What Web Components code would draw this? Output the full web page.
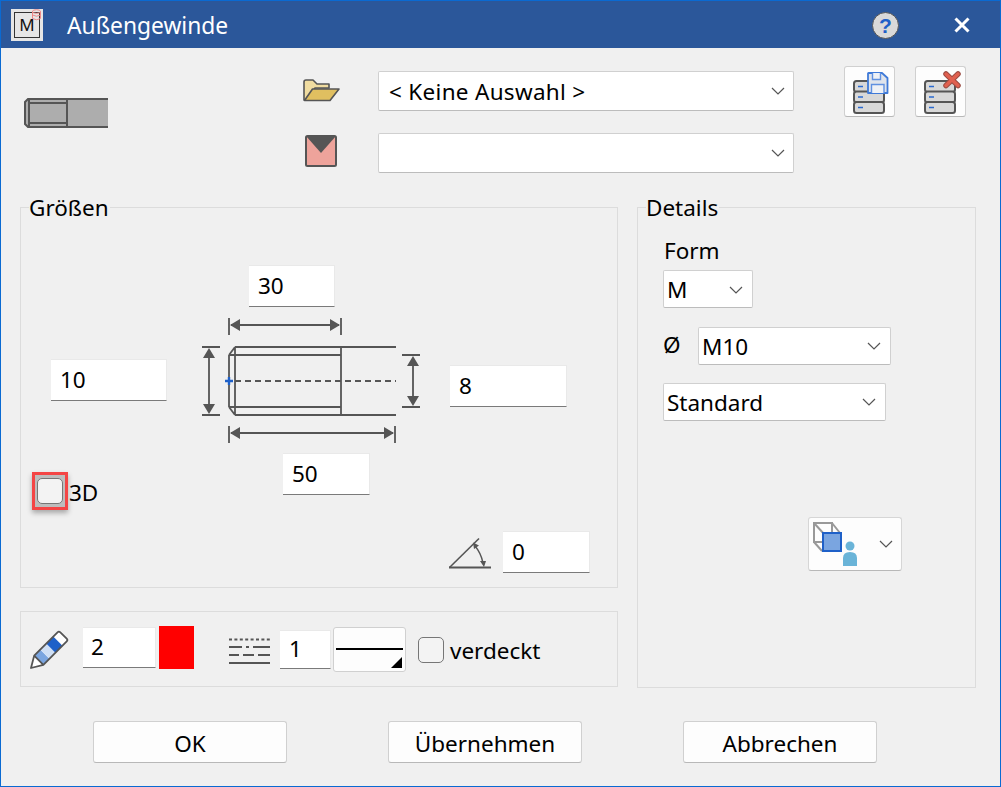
<!DOCTYPE html>
<html lang="de">
<head>
<meta charset="utf-8">
<title>Außengewinde</title>
<style>
  html, body { margin: 0; padding: 0; background: #f0f0f0; }
  body { font: 22.5px "Noto Sans", "Open Sans", sans-serif; color: #000; }
</style>
</head>
<body>
<gewinde-dialog></gewinde-dialog>

<script>
// shared chevron for the drop-downs
const CHEVRON = `<svg width="14" height="8" viewBox="0 0 14 8"><path d="M1 1l6 6 6-6" fill="none" stroke="#555" stroke-width="1.2"/></svg>`;

// icon artwork, looked up by the name attribute of <dlg-icon>
const ICONS = {
  thread: `<svg width="84" height="30" viewBox="0 0 84 30">
    <path d="M4 1H84V29H4L1 26V4z" fill="#adadad"/>
    <path d="M84 1H4L1 4V26L4 29H84M5 1V29M5 5H43M5 25H43M43 1V29" fill="none" stroke="#555" stroke-width="2"/>
  </svg>`,
  folder: `<svg width="37" height="23" viewBox="0 0 37 23">
    <path d="M1 21V3Q1 1 3 1H10L14 5H26V9H12L3 21z" fill="#f0dca0" stroke="#555" stroke-width="1.6" stroke-linejoin="round"/>
    <path d="M1.500 21.500L9.500 10H36L27 21.500z" fill="#e0bf60" stroke="#555" stroke-width="1.6" stroke-linejoin="round"/>
  </svg>`,
  mark: `<svg width="32" height="32" viewBox="0 0 32 32">
    <rect x="1" y="1" width="30" height="30" rx="1.500" fill="#eea39b" stroke="#555" stroke-width="2"/>
    <path d="M1 1H31L16 18z" fill="#555"/>
  </svg>`,
  dbsave: `<svg width="38" height="44" viewBox="0 0 38 44">
    <g fill="#d8d8d8" stroke="#555" stroke-width="2">
      <rect x="1" y="10" width="30" height="11" rx="2.500"/>
      <rect x="1" y="20.500" width="30" height="11" rx="2.500"/>
      <rect x="1" y="31" width="30" height="11" rx="2.500"/>
    </g>
    <path d="M5 15.500h5M5 26h5M5 36.500h5" stroke="#2a6ad0" stroke-width="1.600"/>
    <path d="M15 2.500Q15 2 15.500 2H29L34.500 7V22H15z" fill="#dfe4ec" stroke="#3f7ad8" stroke-width="1.800" stroke-linejoin="round"/>
    <path d="M19.500 2V8.500H27.500V2M18.500 22V13.500H31V22" fill="#eef1f6" stroke="#5f90e0" stroke-width="1.400"/>
  </svg>`,
  dbdel: `<svg width="38" height="44" viewBox="0 0 38 44">
    <g fill="#d8d8d8" stroke="#555" stroke-width="2">
      <rect x="1" y="10" width="30" height="11" rx="2.500"/>
      <rect x="1" y="20.500" width="30" height="11" rx="2.500"/>
      <rect x="1" y="31" width="30" height="11" rx="2.500"/>
    </g>
    <path d="M5 15.500h5M5 26h5M5 36.500h5" stroke="#2a6ad0" stroke-width="1.600"/>
    <path d="M22 3L34 14.500M34 3L22 14.500" stroke="#9a4b42" stroke-width="5.500" stroke-linecap="round"/>
    <path d="M22 3L34 14.500M34 3L22 14.500" stroke="#e0604f" stroke-width="3.500" stroke-linecap="round"/>
  </svg>`,
  dims: `<svg width="240" height="150" viewBox="0 0 240 150" fill="none" stroke="#555" stroke-width="1.800">
    <path d="M39 18V35M151 18V35M41 25H149M205 126V143M39 126V143M41 133H203"/>
    <path d="M12 47H30M12 115H30M19 50V112M212 55H230M212 107H230M223 58V104"/>
    <path d="M45 47H206M45 115H206M39 55H151M39 107H151M39 55V107M39 55L45 47M39 107L45 115M45 47V115M151 47V115"/>
    <path d="M45 81H206" stroke-dasharray="6 4"/>
    <g fill="#555" stroke="none">
      <path d="M40 25L50 19V31zM150 25L140 19V31zM40 133L50 127V139zM204 133L194 127V139z"/>
      <path d="M19 48L13 58H25zM19 114L13 104H25zM223 56L217 66H229zM223 106L217 96H229z"/>
    </g>
    <path d="M35 81H43M39 77V85" stroke="#1e60c8" stroke-width="2.400"/>
  </svg>`,
  angle: `<svg width="44" height="34" viewBox="0 0 44 34" fill="none" stroke="#555">
    <path d="M1.500 31.500L31 2.500" stroke-width="1.600"/>
    <path d="M1 31.500H43" stroke-width="1.800"/>
    <path d="M27 10Q33 17 35 27" stroke-width="1.400"/>
    <path d="M25 6.500L31 9.500L26 13zM36 31L32 25L38 25z" fill="#555" stroke="none"/>
  </svg>`,
  pencil: `<svg width="42" height="42" viewBox="0 0 42 42">
    <g transform="translate(2 40) rotate(-45)">
      <path d="M0 0L11-6.500H44Q46-6.500 46-4.500V4.500Q46 6.500 44 6.500H11z" fill="#fff"/>
      <rect x="11" y="-6.500" width="8.500" height="13" fill="#7aa5e0"/>
      <rect x="19.500" y="-6.500" width="8.500" height="13" fill="#cfdff5"/>
      <rect x="28" y="-6.500" width="10" height="13" fill="#1e60c8"/>
      <path d="M0 0L11-6.500H44Q46-6.500 46-4.500V4.500Q46 6.500 44 6.500H11zM11-6.500V6.500" fill="none" stroke="#555" stroke-width="1.800" stroke-linejoin="round"/>
    </g>
  </svg>`,
  lines: `<svg width="41" height="27" viewBox="0 0 41 27" fill="none" stroke="#555" stroke-width="2">
    <path d="M0 1.500H41" stroke-dasharray="3 2.400"/>
    <path d="M0 9H13M17 9H20M24 9H41"/>
    <path d="M0 17H10M14 17H25M29 17H41"/>
    <path d="M0 25H41"/>
  </svg>`,
  view: `<svg width="50" height="46" viewBox="0 0 50 46">
    <path d="M1 1H19V20H1zM1 1L11 12M19 1L27 11M1 20L9 29" fill="none" stroke="#999" stroke-width="2"/>
    <rect x="10" y="11" width="18" height="18" fill="#7aa5e0" stroke="#1e60c8" stroke-width="2"/>
    <circle cx="37" cy="24" r="4.500" fill="#6ab4d8"/>
    <path d="M30 44V36Q30 30 37 30Q44 30 44 36V44z" fill="#6ab4d8"/>
  </svg>`
};

class DlgIcon extends HTMLElement {
  constructor() {
    super();
    this.attachShadow({ mode: 'open' });
    this.shadowRoot.innerHTML = `<style>:host{display:block;flex:none;line-height:0}</style>` + (ICONS[this.getAttribute('name')] || '');
  }
}
customElements.define('dlg-icon', DlgIcon);

class TitleBar extends HTMLElement {
  constructor() {
    super();
    this.attachShadow({ mode: 'open' });
    this.shadowRoot.innerHTML = `
      <style>
        :host {
          display: flex; align-items: center; height: 48px; box-sizing: border-box;
          background: #2b579a; border: 1px solid #0a6ad2; border-bottom: 0;
          padding-top: 1px; font-size: 22.8px;
        }
        .app {
          width: 32px; height: 32px; margin-left: 10px; background: #e6e6e6; flex: none;
          display: flex; justify-content: center; align-items: flex-end; box-sizing: border-box;
          padding: 3px; position: relative;
        }
        .frame {
          width: 100%; height: 26px; box-sizing: border-box; border: 1px solid #333; border-right-width: 1.5px;
          font-size: 17px; line-height: 24px; text-align: center; color: #111;
        }
        .badge { position: absolute; right: 1px; top: 0; }
        .text { margin-left: 24px; padding-top: 2px; color: #fff; line-height: 30px; }
        .help { margin-left: auto; line-height: 0; }
        .help div {
          width: 27px; height: 27px; box-sizing: border-box; border-radius: 50%; background: #d9d9d9;
          border: 1px solid #555; color: #1e60c8; font: bold 21px/25px "Liberation Sans", sans-serif; text-align: center;
        }
        .close { margin: 0 30px 0 55px; line-height: 0; }
      </style>
      <div class="app">
        <div class="frame">M</div>
        <svg class="badge" width="11" height="12" viewBox="0 0 11 12" fill="none" stroke="#e88" stroke-width="1"><ellipse cx="5.500" cy="2.500" rx="4" ry="1.800"/><path d="M1.500 2.500V9.500Q5.500 12 9.500 9.500V2.500M1.500 6Q5.500 8.500 9.500 6"/></svg>
      </div>
      <div class="text"><slot></slot></div>
      <div class="help"><div>?</div></div>
      <div class="close"><svg width="16" height="16" viewBox="0 0 16 16"><path d="M1.500 1.500L14.500 14.500M14.500 1.500L1.500 14.500" stroke="#fff" stroke-width="3"/></svg></div>`;
  }
}
customElements.define('title-bar', TitleBar);

class GroupBox extends HTMLElement {
  constructor() {
    super();
    this.attachShadow({ mode: 'open' });
    const legend = this.getAttribute('legend');
    this.shadowRoot.innerHTML = `
      <style>
        :host { display: flex; flex-direction: column; box-sizing: border-box; border: 1px solid #dcdcdc; }
        .legend {
          align-self: flex-start; margin: -16px 0 0 8px; padding-right: 1px; height: 30px; line-height: 32px;
          background: #f0f0f0;
        }
      </style>
      ${legend ? `<div class="legend">${legend}</div>` : ''}
      <slot></slot>`;
  }
}
customElements.define('group-box', GroupBox);

class NumField extends HTMLElement {
  constructor() {
    super();
    this.attachShadow({ mode: 'open' });
    this.shadowRoot.innerHTML = `
      <style>
        :host {
          display: block; flex: none; box-sizing: border-box; height: 42px; padding-left: 9px;
          background: #fff; border-top: 1px solid #e9e9e9; border-right: 1px solid #e9e9e9; border-bottom: 1px solid #7a7a7a;
          line-height: 40px;
        }
      </style>
      <slot></slot>`;
  }
}
customElements.define('num-field', NumField);

class ComboBox extends HTMLElement {
  constructor() {
    super();
    this.attachShadow({ mode: 'open' });
    this.shadowRoot.innerHTML = `
      <style>
        :host {
          display: flex; flex: none; align-items: center; justify-content: space-between; box-sizing: border-box;
          height: 38px; padding: 0 9px 0 3px; background: #fff; border: 1px solid #d0d0d0; border-bottom-color: #bcbcbc;
          border-radius: 2px;
        }
      </style>
      <span><slot></slot></span>${CHEVRON}`;
  }
}
customElements.define('combo-box', ComboBox);

class CheckBox extends HTMLElement {
  constructor() {
    super();
    this.attachShadow({ mode: 'open' });
    this.shadowRoot.innerHTML = `
      <style>
        :host { display: flex; align-items: center; flex: none; }
        .box {
          width: 26px; height: 26px; box-sizing: border-box; flex: none; border: 1.500px solid #767676;
          border-radius: 5px; background: #f3f3f3;
        }
        :host([flagged]) .ring {
          padding: 3px 2px 3px; border: 3px solid #f44545; background: #bdbdbd;
          box-shadow: 0 3px 5px rgba(0,0,0,.3);
        }
        :host([flagged]) label { margin: 4px 0 0 1px; }
        label { margin: 2px 0 0 6px; line-height: 30px; }
      </style>
      <div class="ring"><div class="box"></div></div><label><slot></slot></label>`;
  }
}
customElements.define('check-box', CheckBox);

class PushButton extends HTMLElement {
  constructor() {
    super();
    this.attachShadow({ mode: 'open' });
    this.shadowRoot.innerHTML = `
      <style>
        :host {
          display: flex; flex: none; align-items: center; justify-content: center; box-sizing: border-box;
          background: #fdfdfd; border: 1px solid #d0d0d0; border-bottom-color: #b8b8b8; border-radius: 3px;
        }
      </style>
      <slot></slot>`;
  }
}
customElements.define('push-button', PushButton);

class GewindeDialog extends HTMLElement {
  constructor() {
    super();
    this.attachShadow({ mode: 'open' });
    this.shadowRoot.innerHTML = `
      <style>
        :host { display: block; width: 1001px; height: 787px; overflow: hidden; background: #f0f0f0; }
        .main { height: 739px; box-sizing: border-box; border: 1px solid #0a6ad2; border-top: 0; }

        .top { display: flex; height: 159px; padding-left: 23px; box-sizing: border-box; }
        .top .thread { margin: 50px 195px 0 0; }
        .selectors { width: 491px; }
        .sel { display: flex; align-items: center; height: 40px; margin-top: 22px; }
        .sel:first-child { margin-top: 23px; }
        .sel .slot { width: 75px; flex: none; }
        .sel combo-box { width: 416px; height: 40px; padding: 0 8px 0 10px; letter-spacing: 0.3px; }
        .tools { display: flex; gap: 20px; margin: 18px 0 0 50px; }
        .tools push-button { width: 51px; height: 51px; padding-top: 2px; }

        .mid { display: flex; gap: 19px; padding-left: 19px; }
        .left { width: 598px; flex: none; display: flex; flex-direction: column; gap: 23px; }
        .sizes { height: 381px; }
        .r-a { height: 78px; }
        .r-a num-field { width: 86px; margin: 43px 0 0 228px; }
        .r-b { display: flex; height: 150px; align-items: flex-start; }
        .r-b .f10 { width: 116px; margin: 59px 0 0 30px; }
        .r-b .dims { margin-left: 23px; }
        .r-b .f8 { width: 117px; margin: 65px 0 0 20px; }
        .r-c { display: flex; height: 81px; align-items: flex-start; }
        .r-c check-box { width: 68px; margin: 22px 0 0 11px; }
        .r-c num-field { width: 87px; margin: 3px 0 0 183px; }
        .r-d { display: flex; align-items: flex-start; }
        .r-d dlg-icon { margin: 5px 11px 0 427px; }
        .r-d num-field { width: 87px; }

        .pen { height: 76px; }
        .pen .row { display: flex; align-items: flex-start; }
        .pen .pencil { margin: 16px 12px 0 8px; }
        .pen .f2 { width: 73px; height: 41px; margin-top: 15px; padding-left: 8px; line-height: 37px; }
        .pen .red { width: 35px; height: 43px; margin: 14px 0 0 3px; background: #f00; flex: none; }
        .pen .lines { margin: 26px 10px 0 35px; }
        .pen .f1 { width: 51px; height: 39px; margin-top: 18px; padding-left: 9px; line-height: 36px; }
        .pen .ltype {
          width: 73px; height: 45px; margin: 15px 0 0 2px; box-sizing: border-box; flex: none; position: relative;
          background: #fdfdfd; border: 1px solid #d0d0d0; border-radius: 3px;
        }
        .ltype i { display: block; height: 2px; margin: 20px 2px 0 2px; background: #000; }
        .ltype b {
          position: absolute; right: 3px; bottom: 3px; width: 0; height: 0;
          border-left: 11px solid transparent; border-bottom: 11px solid #000;
        }
        .pen check-box { margin: 22px 0 0 12px; }

        .details { width: 339px; height: 481px; flex: none; }
        .details .legend-gap { height: 14px; }
        .form-label { line-height: 30px; margin-left: 26px; }
        .details .m { width: 90px; margin: 4px 0 0 25px; padding-top: 1px; }
        .dia { display: flex; align-items: center; margin: 19px 0 0 25px; }
        .dia span { width: 35px; flex: none; margin-top: -4px; }
        .dia combo-box { width: 193px; }
        .details .std { width: 223px; margin: 18px 0 0 25px; }
        .split {
          width: 94px; height: 54px; margin: 96px 0 0 170px; justify-content: flex-start; padding: 2px 0 0 4px;
          border-color: #d6d6d6; border-bottom-color: #b8b8b8;
        }
        .split svg { margin: -2px 0 0 16px; }

        .actions { display: flex; gap: 101px; padding: 33px 0 0 92px; }
        .actions push-button { width: 194px; height: 42px; padding-top: 2px; }
      </style>

      <title-bar>Außengewinde</title-bar>
      <div class="main">
        <div class="top">
          <dlg-icon class="thread" name="thread"></dlg-icon>
          <div class="selectors">
            <div class="sel"><div class="slot"><dlg-icon name="folder" style="margin-bottom:2px"></dlg-icon></div><combo-box>&lt; Keine Auswahl &gt;</combo-box></div>
            <div class="sel"><div class="slot"><dlg-icon name="mark" style="margin:0 0 4px 2px"></dlg-icon></div><combo-box></combo-box></div>
          </div>
          <div class="tools">
            <push-button><dlg-icon name="dbsave" style="margin-left:5px"></dlg-icon></push-button>
            <push-button><dlg-icon name="dbdel" style="margin-left:5px"></dlg-icon></push-button>
          </div>
        </div>

        <div class="mid">
          <div class="left">
            <group-box class="sizes" legend="Größen">
              <div class="r-a"><num-field>30</num-field></div>
              <div class="r-b">
                <num-field class="f10">10</num-field>
                <dlg-icon class="dims" name="dims"></dlg-icon>
                <num-field class="f8">8</num-field>
              </div>
              <div class="r-c">
                <check-box flagged>3D</check-box>
                <num-field>50</num-field>
              </div>
              <div class="r-d">
                <dlg-icon name="angle"></dlg-icon>
                <num-field>0</num-field>
              </div>
            </group-box>
            <group-box class="pen">
              <div class="row">
                <dlg-icon class="pencil" name="pencil"></dlg-icon>
                <num-field class="f2">2</num-field>
                <div class="red"></div>
                <dlg-icon class="lines" name="lines"></dlg-icon>
                <num-field class="f1">1</num-field>
                <div class="ltype"><i></i><b></b></div>
                <check-box>verdeckt</check-box>
              </div>
            </group-box>
          </div>
          <group-box class="details" legend="Details">
            <div class="legend-gap"></div>
            <div class="form-label">Form</div>
            <combo-box class="m">M</combo-box>
            <div class="dia"><span>Ø</span><combo-box>M10</combo-box></div>
            <combo-box class="std">Standard</combo-box>
            <push-button class="split"><dlg-icon name="view"></dlg-icon>${CHEVRON}</push-button>
          </group-box>
        </div>

        <div class="actions">
          <push-button>OK</push-button>
          <push-button>Übernehmen</push-button>
          <push-button>Abbrechen</push-button>
        </div>
      </div>`;
  }
}
customElements.define('gewinde-dialog', GewindeDialog);
</script>
</body>
</html>
